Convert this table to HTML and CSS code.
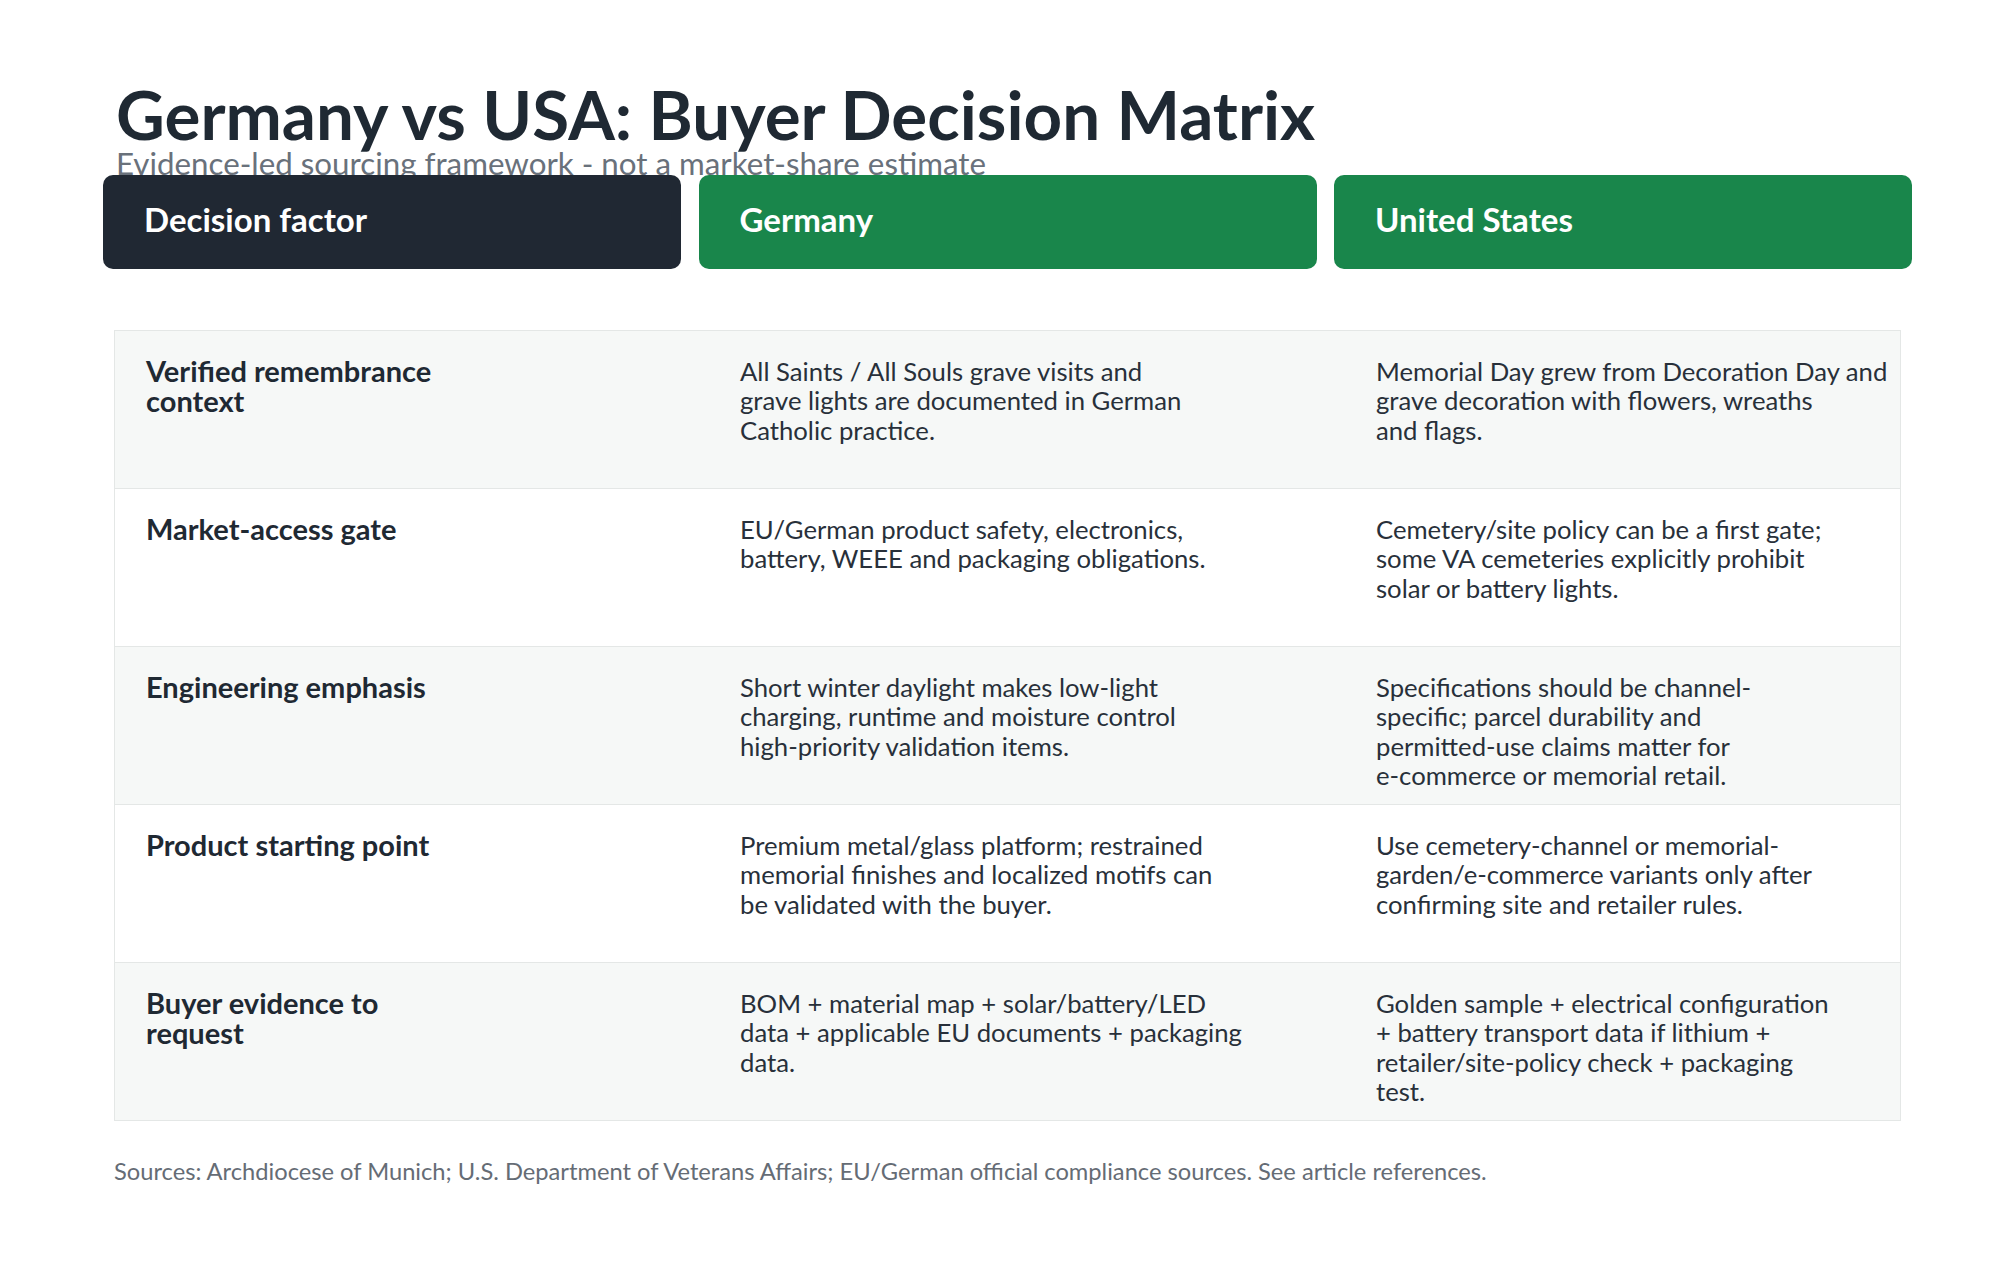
FILE: index.html
```html
<!DOCTYPE html>
<html lang="en">
<head>
<meta charset="utf-8">
<title>Germany vs USA: Buyer Decision Matrix</title>
<link rel="stylesheet" href="styles.css">
</head>
<body>
<main class="page">
  <h1 class="title">Germany vs USA: Buyer Decision Matrix</h1>
  <p class="subtitle">Evidence-led sourcing framework - not a market-share estimate</p>

  <div class="head">
    <div class="head-cell head-dark">Decision factor</div>
    <div class="head-cell head-green">Germany</div>
    <div class="head-cell head-green">United States</div>
  </div>

  <div class="matrix">
    <div class="row row-alt">
      <div class="cell label">Verified remembrance<br>context</div>
      <div class="cell">All Saints / All Souls grave visits and<br>grave lights are documented in German<br>Catholic practice.</div>
      <div class="cell">Memorial Day grew from Decoration Day and<br>grave decoration with flowers, wreaths<br>and flags.</div>
    </div>
    <div class="row">
      <div class="cell label">Market-access gate</div>
      <div class="cell">EU/German product safety, electronics,<br>battery, WEEE and packaging obligations.</div>
      <div class="cell">Cemetery/site policy can be a first gate;<br>some VA cemeteries explicitly prohibit<br>solar or battery lights.</div>
    </div>
    <div class="row row-alt">
      <div class="cell label">Engineering emphasis</div>
      <div class="cell">Short winter daylight makes low-light<br>charging, runtime and moisture control<br>high-priority validation items.</div>
      <div class="cell">Specifications should be channel-<br>specific; parcel durability and<br>permitted-use claims matter for<br>e-commerce or memorial retail.</div>
    </div>
    <div class="row">
      <div class="cell label">Product starting point</div>
      <div class="cell">Premium metal/glass platform; restrained<br>memorial finishes and localized motifs can<br>be validated with the buyer.</div>
      <div class="cell">Use cemetery-channel or memorial-<br>garden/e-commerce variants only after<br>confirming site and retailer rules.</div>
    </div>
    <div class="row row-alt row-last">
      <div class="cell label">Buyer evidence to<br>request</div>
      <div class="cell">BOM + material map + solar/battery/LED<br>data + applicable EU documents + packaging<br>data.</div>
      <div class="cell">Golden sample + electrical configuration<br>+ battery transport data if lithium +<br>retailer/site-policy check + packaging<br>test.</div>
    </div>
  </div>

  <p class="sources">Sources: Archdiocese of Munich; U.S. Department of Veterans Affairs; EU/German official compliance sources. See article references.</p>
</main>
</body>
</html>
```

FILE: styles.css
```css
html, body {
  margin: 0;
  padding: 0;
  background: #ffffff;
}

body {
  font-family: Lato, "Noto Sans", "Liberation Sans", sans-serif;
  color: #1f2933;
}

.page {
  width: 2016px;
  padding-top: 80px;
}

.title {
  margin: 0 0 0 116px;
  font-size: 67.3px;
  line-height: 68px;
  font-weight: 700;
  color: #1f2933;
  white-space: nowrap;
}

.subtitle {
  margin: 0 0 0 116px;
  font-size: 31.3px;
  line-height: 31px;
  font-weight: 400;
  color: #69717b;
  white-space: nowrap;
}

.head {
  position: relative;
  z-index: 1;
  margin: -4px 0 0 103px;
  width: 1809px;
  display: grid;
  grid-template-columns: 578px 618px 578px;
  column-gap: 17.5px;
}

.head-cell {
  height: 94px;
  box-sizing: border-box;
  border-radius: 10px;
  display: flex;
  align-items: center;
  padding: 0 0 6px 41px;
  font-size: 33px;
  font-weight: 700;
  color: #ffffff;
  white-space: nowrap;
}

.head-dark {
  background: #202833;
}

.head-green {
  background: #19864b;
}

.matrix {
  margin: 61px 0 0 114px;
  width: 1787px;
  box-sizing: border-box;
  border: 1px solid #e4e7e6;
}

.row {
  display: grid;
  grid-template-columns: 594px 636px 1fr;
  height: 158px;
  box-sizing: border-box;
  border-bottom: 1px solid #e4e7e6;
  background: #ffffff;
}

.row-alt {
  background: #f6f8f7;
}

.row-last {
  height: 157px;
  border-bottom: 0;
}

.cell {
  padding: 26.2px 0 0 31px;
  font-size: 25.7px;
  line-height: 29.3px;
  font-weight: 400;
  color: #28303a;
  white-space: nowrap;
}

.label {
  padding-top: 24.5px;
  font-size: 29px;
  line-height: 30px;
  font-weight: 700;
  color: #1f2933;
}

.sources {
  margin: 36.4px 0 0 114px;
  font-size: 23.7px;
  line-height: 28.3px;
  color: #656c75;
  white-space: nowrap;
}
```
